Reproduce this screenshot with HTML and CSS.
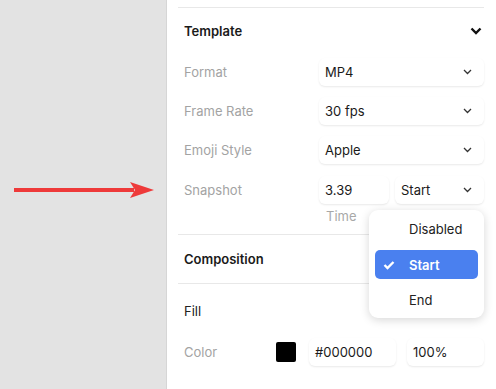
FILE: index.html
```html
<!DOCTYPE html>
<html>
  <head>
    <title>Template settings</title>
    <link rel="stylesheet" href="styles.css">
  </head>
  <body>
    <div class="app">
      <!-- Left canvas area with the pointer arrow -->
      <div class="canvas">
        <svg class="arrow" width="142" height="18" viewBox="0 0 142 18">
          <line x1="0" y1="9" x2="120" y2="9" stroke="#ee3a3a" stroke-width="4" />
          <polygon points="116,1 140,9 116,17 121,9" fill="#ee3a3a" />
        </svg>
      </div>

      <!-- Right settings panel -->
      <div class="panel">
        <div class="section">
          <div class="section-header">
            <span class="title">Template</span>
            <svg class="chev-big" width="12" height="8" viewBox="0 0 12 8">
              <path d="M1.5 1.5 L6 6 L10.5 1.5" fill="none" stroke="#111" stroke-width="2.4" />
            </svg>
          </div>
          <div class="rows">
            <div class="row">
              <span class="label">Format</span>
              <div class="select wide"><span>MP4</span><svg class="chev" width="9" height="6" viewBox="0 0 9 6"><path d="M1 1 L4.5 4.5 L8 1" fill="none" stroke="#333" stroke-width="1.3" /></svg></div>
            </div>
            <div class="row">
              <span class="label">Frame Rate</span>
              <div class="select wide"><span>30 fps</span><svg class="chev" width="9" height="6" viewBox="0 0 9 6"><path d="M1 1 L4.5 4.5 L8 1" fill="none" stroke="#333" stroke-width="1.3" /></svg></div>
            </div>
            <div class="row">
              <span class="label">Emoji Style</span>
              <div class="select wide"><span>Apple</span><svg class="chev" width="9" height="6" viewBox="0 0 9 6"><path d="M1 1 L4.5 4.5 L8 1" fill="none" stroke="#333" stroke-width="1.3" /></svg></div>
            </div>
            <div class="row snapshot">
              <span class="label">Snapshot</span>
              <div class="snap">
                <div class="field">
                  <div class="select time"><span>3.39</span></div>
                  <span class="hint">Time</span>
                </div>
                <div class="select when"><span>Start</span><svg class="chev" width="9" height="6" viewBox="0 0 9 6"><path d="M1 1 L4.5 4.5 L8 1" fill="none" stroke="#333" stroke-width="1.3" /></svg></div>
              </div>
            </div>
          </div>
        </div>

        <div class="section">
          <div class="section-header comp">
            <span class="title">Composition</span>
          </div>
        </div>

        <div class="section">
          <div class="section-header fill">
            <span class="sub">Fill</span>
          </div>
          <div class="row color-row">
            <span class="label short">Color</span>
            <span class="swatch"></span>
            <div class="select hex"><span>#000000</span></div>
            <div class="select pct"><span>100%</span></div>
          </div>
        </div>
      </div>

      <!-- Open dropdown for the snapshot select -->
      <div class="menu">
        <div class="menu-item first"><span class="check"></span>Disabled</div>
        <div class="menu-item active">
          <span class="check">
            <svg width="12" height="10" viewBox="0 0 12 10"><path d="M1.5 5 L4.5 8 L10.5 2" fill="none" stroke="#fff" stroke-width="2.4" /></svg>
          </span>Start
        </div>
        <div class="menu-item"><span class="check"></span>End</div>
      </div>
    </div>
  </body>
</html>
```

FILE: styles.css
```css
html, body {
  margin: 0;
  padding: 0;
}
body {
  font-family: Inter, "Noto Sans", sans-serif;
  font-size: 13px;
  color: #1a1a1a;
  background-color: #ffffff;
}
.app {
  position: relative;
  display: flex;
  width: 496px;
  height: 389px;
  overflow: hidden;
}
.canvas {
  width: 166px;
  flex-shrink: 0;
  background-color: #e3e3e3;
  padding-top: 181px;
  padding-left: 14px;
  box-sizing: border-box;
}
.arrow {
  display: block;
}
.panel {
  flex: 1;
  border-left: 1px solid #d6d6d6;
  padding: 7px 12px 0 11px;
}
.section {
  border-top: 1px solid #e8e8e8;
}
.section-header {
  height: 46px;
  display: flex;
  align-items: center;
  justify-content: space-between;
  padding: 0 2px 0 6px;
}
.section-header.comp {
  height: 48px;
}
.section-header.fill {
  height: 54px;
}
.title {
  font-weight: 600;
}
.sub {
  color: #222;
}
.rows {
  padding-top: 4px;
  padding-bottom: 10px;
}
.row {
  display: flex;
  align-items: flex-start;
  margin-bottom: 11px;
}
.row.snapshot {
  padding-top: 1px;
}
.row:last-child {
  margin-bottom: 0;
}
.label {
  width: 135px;
  padding-left: 6px;
  line-height: 28px;
  color: #a3a3a3;
}
.label.short {
  width: 92px;
}
.select {
  height: 28px;
  display: flex;
  align-items: center;
  justify-content: space-between;
  padding: 0 12px 0 6px;
  box-sizing: border-box;
  border-radius: 6px;
  box-shadow: 0 1px 2px rgba(0, 0, 0, 0.09);
  background-color: #ffffff;
}
.wide {
  width: 165px;
}
.snap {
  display: flex;
  gap: 6px;
}
.field {
  display: flex;
  flex-direction: column;
}
.time {
  width: 70px;
}
.hint {
  margin-top: 4px;
  padding-left: 7px;
  line-height: 16px;
  color: #a8a8a8;
}
.when {
  width: 89px;
}
.color-row {
  align-items: center;
}
.swatch {
  width: 20px;
  height: 20px;
  background-color: #000000;
  border-radius: 2px;
  margin-right: 13px;
}
.hex {
  width: 87px;
  margin-right: 11px;
}
.pct {
  width: 77px;
}
.menu {
  position: absolute;
  left: 369px;
  top: 210px;
  width: 115px;
  padding: 4px 6px 4px;
  box-sizing: border-box;
  background-color: #ffffff;
  border-radius: 9px;
  box-shadow: 0 2px 10px rgba(0, 0, 0, 0.16);
  display: flex;
  flex-direction: column;
  gap: 6px;
}
.menu-item {
  height: 29px;
  display: flex;
  align-items: center;
  padding-left: 8px;
  border-radius: 5px;
  color: #222;
}
.menu-item.first {
  margin-bottom: 1px;
}
.menu-item.active {
  background-color: #4a80ef;
  color: #ffffff;
  font-weight: 600;
}
.check {
  width: 26px;
  display: flex;
  align-items: center;
}
```
